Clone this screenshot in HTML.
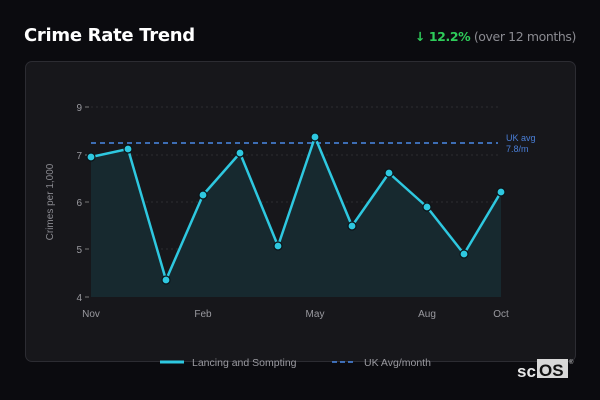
<!DOCTYPE html><html><head><style>
body{margin:0;width:600px;height:400px;background:#0b0b0f;font-family:"Liberation Sans",sans-serif;position:relative;overflow:hidden}
.t{position:absolute;left:24px;top:25px;color:#fff;font-weight:bold;font-size:18px;font-family:"DejaVu Sans",sans-serif;letter-spacing:-0.3px}
.c{position:absolute;right:24px;top:29px;font-size:12.5px;color:#8a8a90;white-space:nowrap;font-family:"DejaVu Sans",sans-serif;letter-spacing:-0.4px}
.c b{color:#2ecc5a}
.card{position:absolute;left:25px;top:61px;width:549px;height:299px;background:#17171b;border:1px solid #2c2c32;border-radius:7px}
</style></head><body>
<div class="t">Crime Rate Trend</div>
<div class="c"><b>↓ 12.2%</b> (over 12 months)</div>
<div class="card"></div>
<svg width="600" height="400" style="position:absolute;left:0;top:0" font-family="Liberation Sans">
<g stroke="#2c2c32" stroke-dasharray="2 3" stroke-width="1">
<line x1="91" y1="107" x2="498" y2="107"/><line x1="91" y1="155" x2="498" y2="155"/><line x1="91" y1="202" x2="498" y2="202"/><line x1="91" y1="249" x2="498" y2="249"/></g>
<g fill="#9a9aa0" font-size="10" text-anchor="end"><text x="82" y="111">9</text><text x="82" y="159">7</text><text x="82" y="206">6</text><text x="82" y="253">5</text><text x="82" y="301">4</text></g>
<g stroke="#777" stroke-width="1"><line x1="85" y1="107" x2="89" y2="107"/><line x1="85" y1="155" x2="89" y2="155"/><line x1="85" y1="202" x2="89" y2="202"/><line x1="85" y1="249" x2="89" y2="249"/><line x1="85" y1="297" x2="89" y2="297"/></g>
<text transform="translate(53,202) rotate(-90)" fill="#8a8a90" font-size="10" text-anchor="middle">Crimes per 1,000</text>
<polygon fill="#17292f" points="91,297 91,157 128,149 166,280 203,195 240,153 278,246 315,137 352,226 389,173 427,207 464,254 501,192 501,297"/>
<line x1="91" y1="143" x2="498" y2="143" stroke="#4a8ae8" stroke-width="1.5" stroke-dasharray="5 4"/>
<text x="506" y="141" fill="#4a7fd8" font-size="9">UK avg</text><text x="506" y="152" fill="#4a7fd8" font-size="9">7.8/m</text>
<polyline fill="none" stroke="#2ec8e0" stroke-width="2.5" stroke-linejoin="round" points="91,157 128,149 166,280 203,195 240,153 278,246 315,137 352,226 389,173 427,207 464,254 501,192"/>
<g fill="#2ec8e0" stroke="#0b1418" stroke-width="1.2">
<circle cx="91" cy="157" r="4"/><circle cx="128" cy="149" r="4"/><circle cx="166" cy="280" r="4"/><circle cx="203" cy="195" r="4"/><circle cx="240" cy="153" r="4"/><circle cx="278" cy="246" r="4"/><circle cx="315" cy="137" r="4"/><circle cx="352" cy="226" r="4"/><circle cx="389" cy="173" r="4"/><circle cx="427" cy="207" r="4"/><circle cx="464" cy="254" r="4"/><circle cx="501" cy="192" r="4"/></g>
<g fill="#9a9aa0" font-size="10" text-anchor="middle"><text x="91" y="317">Nov</text><text x="203" y="317">Feb</text><text x="315" y="317">May</text><text x="427" y="317">Aug</text><text x="501" y="317">Oct</text></g>
<line x1="160" y1="362" x2="184" y2="362" stroke="#2ec8e0" stroke-width="3"/>
<text x="192" y="366" fill="#9a9aa0" font-size="10.5">Lancing and Sompting</text>
<line x1="332" y1="362" x2="356" y2="362" stroke="#4a8ae8" stroke-width="1.5" stroke-dasharray="5 3"/>
<text x="364" y="366" fill="#9a9aa0" font-size="10.5">UK Avg/month</text>
<text x="517" y="377" fill="#e8e8e8" font-size="17" font-weight="bold">sc</text>
<rect x="537" y="359" width="31" height="19" fill="#d8d8d8"/>
<text x="539" y="376" fill="#111" font-size="17" font-weight="bold">OS</text>
<text x="569" y="364" fill="#ccc" font-size="6">®</text>
</svg>
</body></html>
